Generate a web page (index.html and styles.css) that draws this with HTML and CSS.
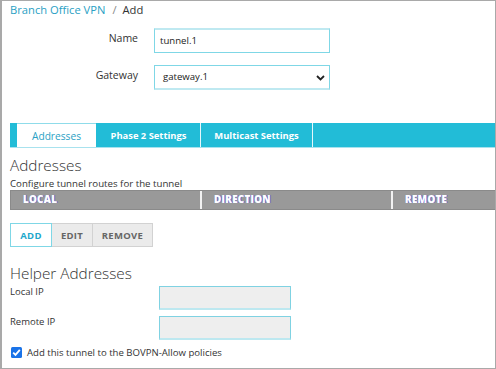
FILE: index.html
```html
<!DOCTYPE html>
<html>
<head>
<meta charset="utf-8">
<link rel="stylesheet" href="styles.css">
</head>
<body>
<div class="page">
  <div class="crumbs"><a class="crumb-link">Branch Office VPN</a><span class="sep">/</span><span class="crumb-cur">Add</span></div>
  <div class="form">
    <div class="row">
      <label class="lbl">Name</label>
      <div class="field">tunnel.1</div>
    </div>
    <div class="row">
      <label class="lbl">Gateway</label>
      <div class="field select">gateway.1
        <svg class="chev" width="9" height="6" viewBox="0 0 9 6"><path d="M1 1 L4.5 4.5 L8 1" fill="none" stroke="#222" stroke-width="1.8"/></svg>
      </div>
    </div>
  </div>
  <div class="tabs">
    <div class="tab-lead"></div>
    <div class="tab active">Addresses</div>
    <div class="tab t2">Phase 2 Settings</div>
    <div class="tab t3">Multicast Settings</div>
    <div class="tab-rest"></div>
  </div>
  <h2 class="h">Addresses</h2>
  <div class="desc">Configure tunnel routes for the tunnel</div>
  <div class="thead">
    <div class="th c1">LOCAL</div>
    <div class="th c2">DIRECTION</div>
    <div class="th c3">REMOTE</div>
  </div>
  <div class="btns">
    <div class="btn primary">ADD</div>
    <div class="btn b-edit">EDIT</div>
    <div class="btn b-remove">REMOVE</div>
  </div>
  <h2 class="h h2">Helper Addresses</h2>
  <div class="helpers">
    <div class="hrow">
      <div class="hlbl">Local IP</div>
      <div class="hin"></div>
    </div>
    <div class="hrow">
      <div class="hlbl">Remote IP</div>
      <div class="hin"></div>
    </div>
  </div>
  <div class="check">
    <svg class="cb" width="11" height="11" viewBox="0 0 11 11"><rect x="0" y="0" width="11" height="11" rx="1.5" fill="#1a73e8"/><path d="M2.2 5.6 L4.5 7.9 L8.8 2.8" fill="none" stroke="#fff" stroke-width="1.8"/></svg>
    <span>Add this tunnel to the BOVPN-Allow policies</span>
  </div>
</div>
</body>
</html>
```
FILE: styles.css
```css
html, body { margin: 0; padding: 0; background: #fff; }
body { font-family: "Open Sans", "Noto Sans", sans-serif; color: #333; }
.page {
  box-sizing: border-box;
  width: 496px; height: 369px;
  border: 1px solid #a9a9a9;
  border-left: 2px solid #a9a9a9;
  padding: 0 0 0 8px;
  overflow: hidden;
}
.crumbs { font-size: 11.2px; height: 16px; line-height: 16px; margin-top: 1px; }
.crumb-link { color: #2a9fc4; }
.sep { color: #888; margin: 0 6px 0 7px; }
.crumb-cur { color: #333; }
.form { margin-top: 10px; }
.row { display: flex; align-items: center; height: 24px; margin-bottom: 13px; }
.lbl { width: 128px; text-align: right; font-size: 10.5px; color: #333; margin-right: 16px; position: relative; top: -2px; }
.field {
  box-sizing: border-box; width: 176px; height: 25px;
  border: 1px solid #7fd7e6; border-top: 2px solid #bfe9f1;
  font-size: 9.6px; color: #222; padding-left: 5px; line-height: 21px;
  display: flex; align-items: center;
}
.select { border-top: 1px solid #7fd7e6; border-bottom: 2px solid #bfe9f1; justify-content: space-between; padding-right: 4px; padding-left: 8px; }
.chev { margin-top: 2px; }
.tabs {
  display: flex; height: 24px; margin-top: 34px;
  background: #22bcd7;
  border-bottom: 1px solid #a8e2ee;
}
.tab-lead { width: 7px; }
.tab { color: #fff; font-weight: 700; font-size: 9.4px; display: flex; align-items: center; justify-content: center; border-right: 1px solid #e5f7fb; }
.tab.active { width: 79px; background: #fff; color: #2a9fc4; font-weight: 400; font-size: 10.2px; border-top: 1px solid #8fdcea; border-right: 0; margin-right: 1px; }
.t2 { width: 103px; }
.t3 { width: 111px; }
.tab-rest { flex: 1; }
.h { font-size: 15.3px; font-weight: 300; color: #333; margin: 6px 0 0; line-height: 22px; }
.desc { font-size: 9.7px; line-height: 13px; margin-top: 1px; color: #333; }
.thead { display: flex; height: 20px; background: #999; border: 1px solid #8a8a8a; border-right: 0; box-sizing: border-box; }
.th { color: #fff; font-weight: 800; font-size: 9.8px; letter-spacing: 0.3px; line-height: 18px; text-shadow: 1px 0 0 #6a6ad8; padding-left: 12px; box-sizing: border-box; }
.c1 { width: 191px; border-right: 2px solid #f2f2f2; }
.c2 { width: 191px; border-right: 2px solid #f2f2f2; }
.c3 { flex: 1; }
.btns { display: flex; margin-top: 13px; }
.btn { box-sizing: border-box; height: 24px; font-size: 9.5px; font-weight: 700; display: flex; align-items: center; justify-content: center; background: #ebebeb; border: 1px solid #d2d2d2; color: #666; letter-spacing: 0.3px; }
.btn.primary { width: 42px; background: #fff; border-color: #7fd7e6; color: #1fa8cc; }
.b-edit { width: 41px; border-left: 0; }
.b-remove { width: 60px; border-left: 0; }
.h2 { margin-top: 15px; }
.helpers { margin-top: 2px; }
.hrow { display: flex; height: 23px; margin-bottom: 7px; }
.hlbl { width: 149px; font-size: 9.5px; line-height: 12px; }
.hin { box-sizing: border-box; width: 132px; height: 24px; background: #eeeeee; border: 1px solid #7fd2e2; border-bottom: 2px solid #bde8f0; }
.check { display: flex; align-items: center; margin-top: 2px; font-size: 9.6px; color: #333; }
.cb { margin-left: 1px; margin-right: 5px; }
```
